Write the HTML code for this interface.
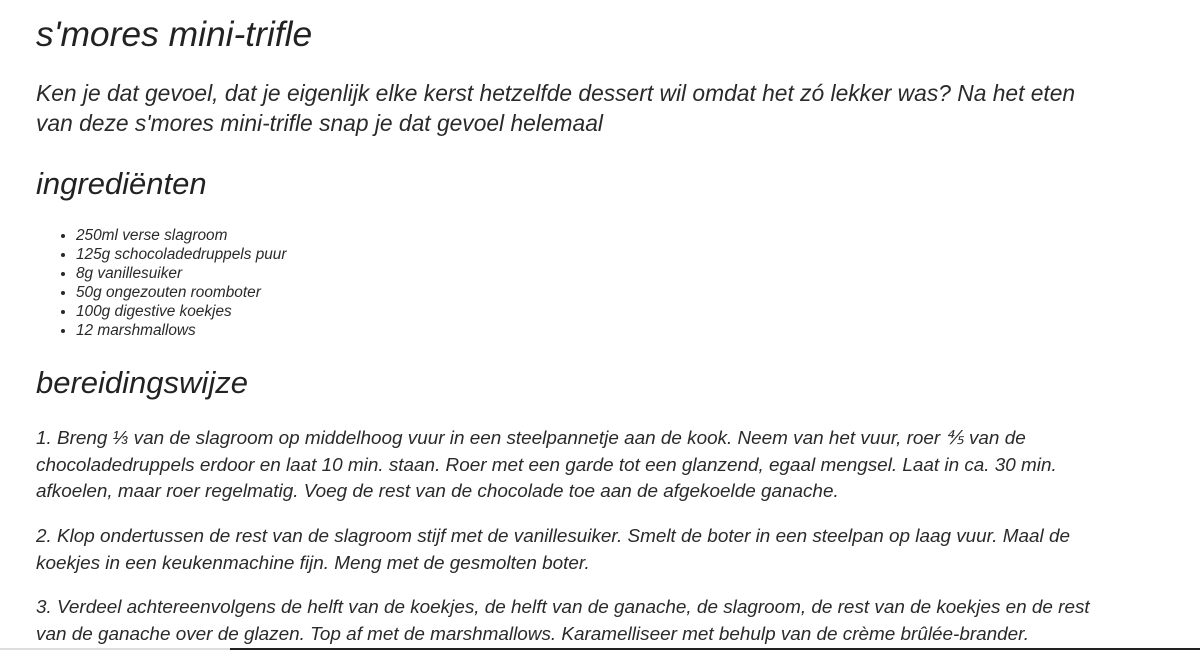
<!DOCTYPE html>
<html><head><meta charset="utf-8"><style>
html,body{margin:0;padding:0;background:#fff;width:1200px;height:651px;overflow:hidden;position:relative}
body{font-family:"Liberation Sans",sans-serif;font-style:italic;color:#222;}
.a{position:absolute;left:36px;white-space:nowrap;margin:0;font-weight:normal}
h1{font-size:35.4px;top:14px;letter-spacing:0}
.lead{font-size:22.8px;line-height:30px;top:78px;letter-spacing:0;color:#2a2a2a}
h2{font-size:31px;letter-spacing:0}
ul{position:absolute;left:36px;top:226px;margin:0;padding-left:40px;font-size:15.4px;line-height:19px;letter-spacing:0;color:#2a2a2a}
.p{font-size:18.9px;line-height:26.5px;letter-spacing:0;color:#2a2a2a}
.l1{position:absolute;left:0;top:648px;width:230px;height:2px;background:#ddd}
.l2{position:absolute;left:230px;top:648px;width:970px;height:2px;background:#222}
</style></head><body>
<h1 class="a">s'mores mini-trifle</h1>
<div class="a lead">Ken je dat gevoel, dat je eigenlijk elke kerst hetzelfde dessert wil omdat het zó lekker was? Na het eten<br>van deze s'mores mini-trifle snap je dat gevoel helemaal</div>
<h2 class="a" style="top:166px">ingrediënten</h2>
<ul>
<li>250ml verse slagroom</li>
<li>125g schocoladedruppels puur</li>
<li>8g vanillesuiker</li>
<li>50g ongezouten roomboter</li>
<li>100g digestive koekjes</li>
<li>12 marshmallows</li>
</ul>
<h2 class="a" style="top:365px">bereidingswijze</h2>
<div class="a p" style="top:426px">1. Breng ⅓ van de slagroom op middelhoog vuur in een steelpannetje aan de kook. Neem van het vuur, roer ⅘ van de<br>chocoladedruppels erdoor en laat 10 min. staan. Roer met een garde tot een glanzend, egaal mengsel. Laat in ca. 30 min.<br>afkoelen, maar roer regelmatig. Voeg de rest van de chocolade toe aan de afgekoelde ganache.</div>
<div class="a p" style="top:524px">2. Klop ondertussen de rest van de slagroom stijf met de vanillesuiker. Smelt de boter in een steelpan op laag vuur. Maal de<br>koekjes in een keukenmachine fijn. Meng met de gesmolten boter.</div>
<div class="a p" style="top:595px">3. Verdeel achtereenvolgens de helft van de koekjes, de helft van de ganache, de slagroom, de rest van de koekjes en de rest<br>van de ganache over de glazen. Top af met de marshmallows. Karamelliseer met behulp van de crème brûlée-brander.</div>
<div class="l1"></div><div class="l2"></div>
</body></html>
